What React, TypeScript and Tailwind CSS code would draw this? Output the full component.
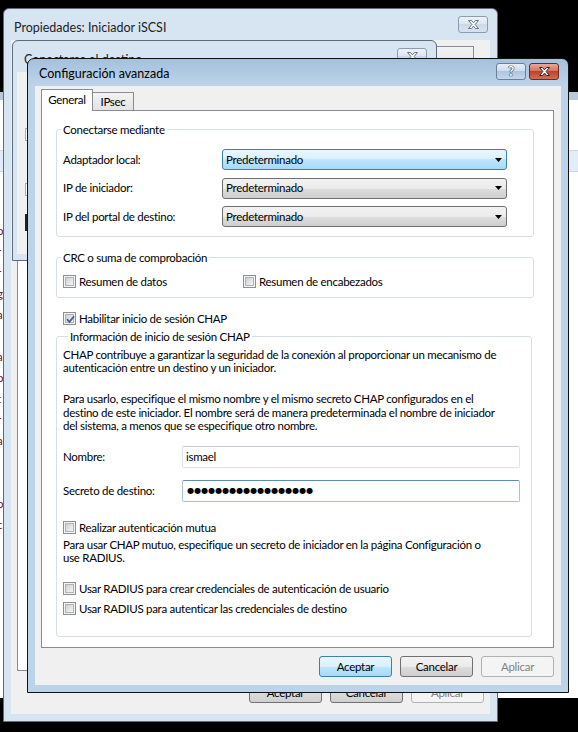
import React from 'react';

// Windows 7 style dialog stack: "Configuración avanzada" over the iSCSI initiator windows

function XGlyph({ stroke = '#2b2b2b' }: { stroke?: string }) {
  return (
    <svg width="13" height="11" viewBox="0 0 13 11">
      <path
        d="M1.5 1.5h3l2 2.4 2-2.4h3l-3.4 4 3.4 4h-3l-2-2.4-2 2.4h-3l3.4-4z"
        fill="#fff"
        stroke={stroke}
        strokeWidth="1"
        strokeLinejoin="round"
      />
    </svg>
  );
}

function CloseInactive() {
  return (
    <div className="flex h-[17px] w-[30px] items-center justify-center rounded-[3px] border border-[#8c9bb0] bg-[linear-gradient(#eef3f9,#dce6f1_45%,#cbd9e8_50%,#d8e3f0)]">
      <XGlyph stroke="#6a7788" />
    </div>
  );
}

function Check({ on = false }: { on?: boolean }) {
  return (
    <span className="relative flex h-[13px] w-[13px] shrink-0 border border-[#8e8f8f] bg-[#f4f4f4] p-[1px]">
      <span className="h-full w-full border border-[#aeb3b9] bg-[linear-gradient(135deg,#cbcfd5,#f6f6f6)]" />
      {on && (
        <svg className="absolute left-[1px] top-[1px]" width="11" height="11" viewBox="0 0 11 11">
          <path d="M2 5.2 L4.4 7.8 L9 2.4" fill="none" stroke="#4a5f97" strokeWidth="1.8" />
        </svg>
      )}
    </span>
  );
}

function CheckRow({ label, on }: { label: string; on?: boolean }) {
  return (
    <div className="flex h-[13px] items-center gap-[3px] whitespace-nowrap leading-[13px]">
      <Check on={on} />
      <span>{label}</span>
    </div>
  );
}

function Combo({ hot = false }: { hot?: boolean }) {
  return (
    <div
      className={`flex h-[21px] w-[285px] items-center justify-between rounded-[3px] border pl-[3px] pr-[4px] ${
        hot
          ? 'border-[#3c7fb1] bg-[linear-gradient(#eaf6fd,#d9f0fc_50%,#bee6fd_50%,#a7d9f5)]'
          : 'border-[#707070] bg-[linear-gradient(#f2f2f2,#ebebeb_50%,#dddddd_50%,#cfcfcf)]'
      }`}
    >
      <span>Predeterminado</span>
      <svg width="7" height="4" viewBox="0 0 7 4">
        <path d="M0 0h7L3.5 4z" fill="#000" />
      </svg>
    </div>
  );
}

function Btn({ label, kind = 'normal' }: { label: string; kind?: 'default' | 'normal' | 'disabled' }) {
  const look =
    kind === 'default'
      ? 'border-[#3c7fb1] bg-[linear-gradient(#eaf6fd,#d9f0fc_50%,#bee6fd_50%,#a7d9f5)] text-black'
      : kind === 'disabled'
        ? 'border-[#adb2b5] bg-[#f4f4f4] text-[#838383]'
        : 'border-[#707070] bg-[linear-gradient(#f2f2f2,#ebebeb_50%,#dddddd_50%,#cfcfcf)] text-black';
  return (
    <div className={`flex h-[21px] w-[73px] items-center justify-center rounded-[3px] border ${look}`}>{label}</div>
  );
}

function Group({
  title,
  legendOffset,
  width,
  className = '',
  children,
}: {
  title: string;
  legendOffset: string;
  width: string;
  className?: string;
  children: React.ReactNode;
}) {
  return (
    <fieldset className={`ml-[14px] rounded-[3px] border border-[#d5dfe5] ${width} ${className}`}>
      <legend className={`${legendOffset} px-[2px] leading-[13px]`}>{title}</legend>
      {children}
    </fieldset>
  );
}

const leftLetters = ['o', 'r', 'r', 'g', 'a', 'i', 'a', 'o', 't', 'r', 'a', 'i', 'i', 'o', 'c'];

export default function App() {
  return (
    <div className="relative h-[732px] w-[578px] overflow-hidden bg-black font-['Lato','Noto_Sans',sans-serif] text-[11.5px] tracking-[-0.28px] text-black">
      {/* application window far behind */}
      <div className="absolute left-0 top-[92px] flex h-[606px] w-[578px] flex-col bg-white">
        <div className="h-[8px] bg-[#b9c9da]" />
        <div className="mt-[50px] h-[22px] border-y border-[#c5d7ec] bg-[#e4edf7]" />
        <div className="mt-[52px] flex w-[3px] flex-col gap-[8px] overflow-hidden leading-[13px] text-[#7a1020]">
          {leftLetters.map((l, i) => (
            <span key={i} className="-ml-[3px]">
              {l}
            </span>
          ))}
        </div>
      </div>

      {/* Propiedades: Iniciador iSCSI */}
      <div className="absolute left-[3px] top-[8px] flex h-[714px] w-[495px] flex-col rounded-t-[6px] border border-[#5d6b7a] bg-[#d7e4f2]">
        <div className="flex h-[31px] items-start justify-between pl-[10px] pr-[9px] pt-[7px]">
          <span className="mt-[3px] whitespace-nowrap text-[12.5px] tracking-normal text-[#1e1e1e]">
            Propiedades: Iniciador iSCSI
          </span>
          <CloseInactive />
        </div>
        <div className="mx-[7px] mb-[7px] flex flex-1 flex-col bg-[#f0f0f0] px-[6px] pt-[6px]">
          <div className="flex h-[21px] items-end justify-end pr-[10px]">
            <div className="h-[21px] w-[42px] border border-b-0 border-[#898c95] bg-[linear-gradient(#f2f2f2,#e5e5e5)]" />
          </div>
          <div className="h-[604px] border border-[#898c95] bg-white" />
          <div className="mt-[11px] flex justify-end gap-[8px]">
            <Btn label="Aceptar" />
            <Btn label="Cancelar" />
            <Btn label="Aplicar" kind="disabled" />
          </div>
        </div>
      </div>

      {/* Conectarse al destino */}
      <div className="absolute left-[12px] top-[40px] flex h-[221px] w-[425px] flex-col rounded-t-[6px] border border-[#5d6b7a] bg-[#d7e4f2]">
        <div className="flex h-[31px] items-start justify-between pl-[11px] pr-[9px] pt-[7px]">
          <span className="mt-[3px] whitespace-nowrap text-[12.5px] tracking-normal text-[#1e1e1e]">
            Conectarse al destino
          </span>
          <CloseInactive />
        </div>
        <div className="mx-[4px] mb-[6px] flex flex-1 flex-col bg-[#f0f0f0] pl-[8px]">
          <div className="mt-[56px] h-[13px] w-[200px] border border-[#abadb3] bg-white" />
          <div className="mt-[42px] h-[13px] w-[200px] border border-[#abadb3] bg-white" />
          <div className="mt-[18px] h-[17px] w-[200px] border-l-2 border-[#222] bg-[#e8e8e8]" />
        </div>
      </div>

      {/* Configuración avanzada */}
      <div className="absolute left-[27px] top-[58px] flex h-[635px] w-[542px] flex-col rounded-t-[7px] border border-[#111] bg-[linear-gradient(#a6c0dc,#bcd3ea_26px,#bcd3ea)]">
        <div className="flex h-[27px] items-start justify-between pl-[11px] pr-[9px] pt-[4px]">
          <span className="mt-[2px] whitespace-nowrap text-[12.5px] tracking-normal">Configuración avanzada</span>
          <div className="flex gap-[3px]">
            <div className="flex h-[17px] w-[30px] items-center justify-center rounded-[3px] border border-[#6b7f99] bg-[linear-gradient(#e6eef8,#cddcee_45%,#aec5e0_50%,#c4d7ec)] text-[13px] font-bold leading-none text-white [text-shadow:0_0_1px_#223,0_0_1px_#223,0_0_1px_#223]">
              ?
            </div>
            <div className="flex h-[17px] w-[30px] items-center justify-center rounded-[3px] border border-[#6b2a22] bg-[linear-gradient(#eaa99a,#d7735f_45%,#c0412c_50%,#d26f50)]">
              <XGlyph />
            </div>
          </div>
        </div>

        <div className="mx-[7px] mb-[7px] flex flex-1 flex-col bg-[#f0f0f0] pl-[6px] pr-[7px] pt-[3px]">
          {/* tabs */}
          <div className="flex h-[21px] items-end">
            <div className="relative z-10 -mb-[1px] flex h-[22px] w-[52px] items-center justify-center border border-b-0 border-[#898c95] bg-white pb-[1px]">
              General
            </div>
            <div className="flex h-[18px] w-[41px] items-center justify-center border border-b-0 border-l-0 border-[#898c95] bg-[linear-gradient(#f3f3f3,#e3e3e3)] pt-[1px]">
              IPsec
            </div>
          </div>

          {/* tab page */}
          <div className="flex h-[538px] flex-col border border-[#898c95] bg-white">
            <Group title="Conectarse mediante" legendOffset="ml-[4px]" width="w-[478px]" className="mt-[12px] pb-[9px] pt-[13px]">
              <div className="flex flex-col gap-[7.5px] pl-[6px]">
                {[
                  { label: 'Adaptador local:', hot: true },
                  { label: 'IP de iniciador:', hot: false },
                  { label: 'IP del portal de destino:', hot: false },
                ].map((r) => (
                  <div key={r.label} className="flex items-center">
                    <span className="w-[159px] whitespace-nowrap">{r.label}</span>
                    <Combo hot={r.hot} />
                  </div>
                ))}
              </div>
            </Group>

            <Group title="CRC o suma de comprobación" legendOffset="ml-[4px]" width="w-[478px]" className="mt-[14px] pb-[9px] pt-[11px]">
              <div className="flex pl-[6px]">
                <div className="w-[180px]">
                  <CheckRow label="Resumen de datos" />
                </div>
                <CheckRow label="Resumen de encabezados" />
              </div>
            </Group>

            <div className="ml-[21px] mt-[14px]">
              <CheckRow label="Habilitar inicio de sesión CHAP" on />
            </div>

            <Group title="Información de inicio de sesión CHAP" legendOffset="ml-[11px]" width="w-[476px]" className="mt-[5px] pb-[21px] pt-[5px]">
              <div className="flex flex-col pl-[6px]">
                <p className="whitespace-nowrap leading-[13px]">
                  CHAP contribuye a garantizar la seguridad de la conexión al proporcionar un mecanismo de
                  <br />
                  autenticación entre un destino y un iniciador.
                </p>
                <p className="mt-[18px] whitespace-nowrap leading-[13.5px]">
                  Para usarlo, especifique el mismo nombre y el mismo secreto CHAP configurados en el
                  <br />
                  destino de este iniciador. El nombre será de manera predeterminada el nombre de iniciador
                  <br />
                  del sistema, a menos que se especifique otro nombre.
                </p>
                <div className="mt-[13.5px] flex items-center">
                  <span className="w-[119px]">Nombre:</span>
                  <div className="flex h-[22px] w-[338px] items-center rounded-[2px] border border-[#dfe3e8] border-t-[#c5cad1] bg-white pl-[3px]">
                    ismael
                  </div>
                </div>
                <div className="mt-[12px] flex items-center">
                  <span className="w-[119px]">Secreto de destino:</span>
                  <div className="flex h-[22px] w-[338px] items-center rounded-[2px] border border-[#a4c3e0] border-t-[#5b8dbb] bg-white pl-[4px] font-['DejaVu_Sans',sans-serif] text-[8px]">
                    {Array.from({ length: 18 }).map((_, i) => (
                      <span key={i} className="inline-block w-[7px] text-center">
                        ●
                      </span>
                    ))}
                  </div>
                </div>
                <div className="mt-[19px]">
                  <CheckRow label="Realizar autenticación mutua" />
                </div>
                <p className="mt-[4px] whitespace-nowrap leading-[13px]">
                  Para usar CHAP mutuo, especifique un secreto de iniciador en la página Configuración o
                  <br />
                  use RADIUS.
                </p>
                <div className="mt-[18px]">
                  <CheckRow label="Usar RADIUS para crear credenciales de autenticación de usuario" />
                </div>
                <div className="mt-[7px]">
                  <CheckRow label="Usar RADIUS para autenticar las credenciales de destino" />
                </div>
              </div>
            </Group>
          </div>

          {/* dialog buttons */}
          <div className="mt-[8px] flex justify-end gap-[8px]">
            <Btn label="Aceptar" kind="default" />
            <Btn label="Cancelar" />
            <Btn label="Aplicar" kind="disabled" />
          </div>
        </div>
      </div>
    </div>
  );
}
